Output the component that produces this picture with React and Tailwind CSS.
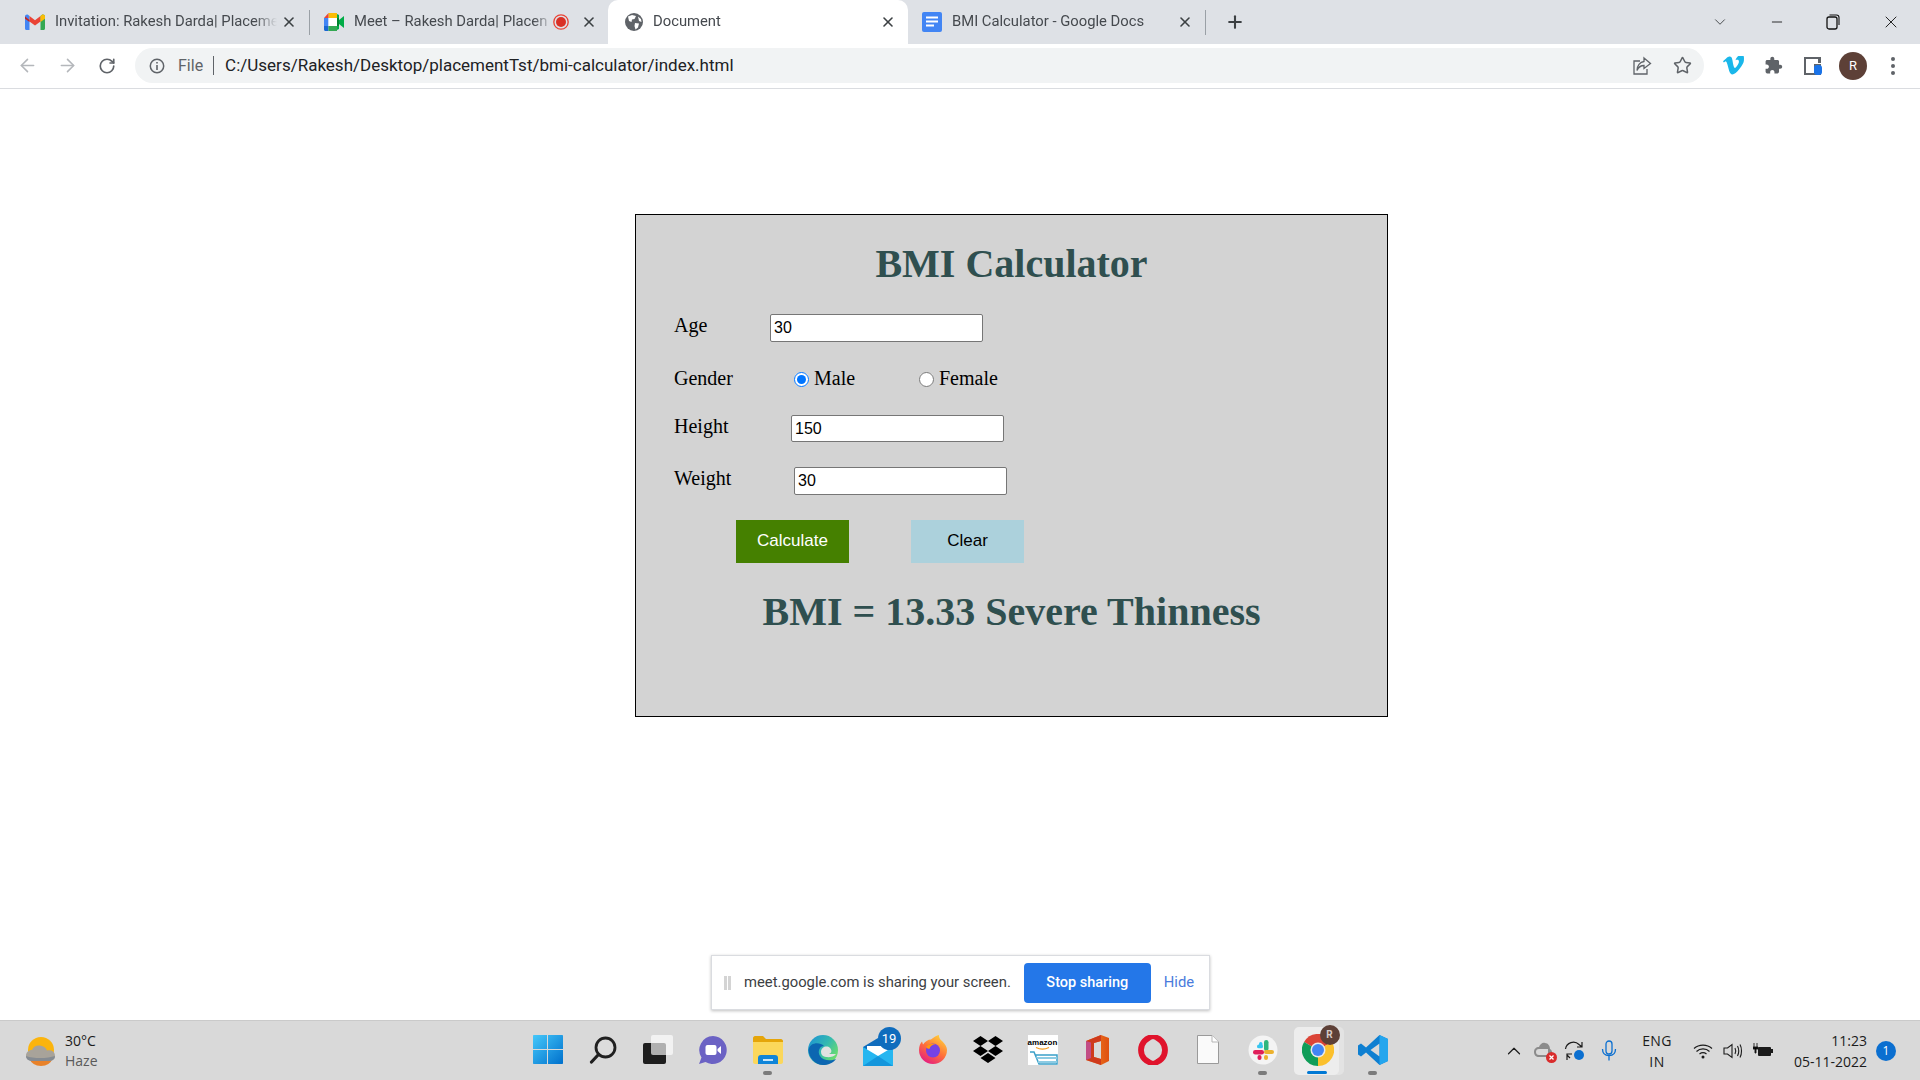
import { ArrowLeft, ArrowRight, RotateCw, X, Plus, ChevronDown, ChevronUp, Minus, Star } from 'lucide-react';

function GmailIcon() {
  return (
    <svg width="20" height="16" viewBox="0 0 20 16">
      <path d="M0 2.5C0 .5 2 0 3 .8L4.500 2V16H1.500C.6 16 0 15.300 0 14.500Z" fill="#4285f4" />
      <path d="M20 2.500C20 .5 18 0 17 .8L15.500 2V16H18.500C19.400 16 20 15.300 20 14.500Z" fill="#34a853" />
      <path d="M4.500 2L10 6.300 15.500 2V7.500L10 11.600 4.500 7.500Z" fill="#ea4335" />
      <path d="M0 2.500L4.500 6V8L0 4.700Z" fill="#c5221f" />
      <path d="M15.500 2L17 .8C18 0 20 .5 20 2.500V4.700L15.500 8Z" fill="#fbbc04" />
    </svg>
  );
}

function MeetIcon() {
  return (
    <svg width="20" height="18" viewBox="0 0 20 18">
      <path d="M4.500 0H13V5H4.500Z" fill="#fbbc04" />
      <path d="M4.500 0V5H0Z" fill="#ea4335" />
      <path d="M0 5H4.500V13H0Z" fill="#4285f4" />
      <path d="M0 13H4.500V18H1.500C.6 18 0 17.300 0 16.500Z" fill="#1967d2" />
      <path d="M4.500 13H13V18H4.500Z" fill="#34a853" />
      <path d="M4.500 5H13V13H4.500Z" fill="#fff" />
      <path d="M13 1V17L15 16V11L20 15V3L15 7V2Z" fill="#00ac47" />
      <path d="M13 5H15V13H13Z" fill="#00832d" />
    </svg>
  );
}

function GlobeIcon() {
  return (
    <svg width="18" height="18" viewBox="0 0 18 18">
      <circle cx="9" cy="9" r="9" fill="#5f6368" />
      <path d="M3 3.500L7 2 11 3 9.500 6 7 6.500 6.500 9 4 8ZM10 10L14 10.500 13 14.500 10.500 16.500 9.500 13ZM13 3.500L16 6 16.500 9 14 8Z" fill="#fff" />
    </svg>
  );
}

function DocsIcon() {
  return (
    <svg width="20" height="20" viewBox="0 0 20 20">
      <rect width="20" height="20" rx="2" fill="#4285f4" />
      <path d="M4 4.500H16V6.500H4ZM4 8.500H16V10.500H4ZM4 12.500H12V14.500H4Z" fill="#fff" />
    </svg>
  );
}

function RecDot() {
  return (
    <svg width="16" height="16" viewBox="0 0 16 16" className="shrink-0">
      <circle cx="8" cy="8" r="7.200" fill="none" stroke="#ea4335" strokeWidth="1.300" />
      <circle cx="8" cy="8" r="5" fill="#d93025" />
    </svg>
  );
}

function Tab({ w, pad, gap, icon, title, rec, active }) {
  return (
    <div className={`relative flex h-[44px] items-center shrink-0 ${w} ${pad} ${active ? 'bg-white rounded-t-[10px]' : ''} font-['Roboto',sans-serif] text-[14.800px] text-[#45494e]`}>
      <div className="flex w-[20px] justify-center shrink-0">{icon}</div>
      <div className={`${gap} flex-1 -translate-y-px overflow-hidden whitespace-nowrap [mask-image:linear-gradient(to_right,black_90%,transparent_100%)]`}>{title}</div>
      {rec && <RecDot />}
      <X size={16} strokeWidth={2.400} color="#3c4043" className={`shrink-0 ${rec ? 'ml-[12px] mr-[11px]' : 'mr-[12px] ml-[4px]'}`} />
    </div>
  );
}

function TabStrip() {
  return (
    <div className="flex h-[44px] items-center bg-[#dee1e6]">
      <Tab w="w-[309px]" pad="pl-[25px]" gap="ml-[10px]" icon={<GmailIcon />} title="Invitation: Rakesh Darda| Placeme" />
      <div className="h-[25px] w-px bg-[#9aa0a6] shrink-0" />
      <Tab w="w-[298px]" pad="pl-[14px]" gap="ml-[10px]" icon={<MeetIcon />} title="Meet – Rakesh Darda| Placen" rec />
      <Tab w="w-[300px]" pad="pl-[16px]" gap="ml-[9px]" active icon={<GlobeIcon />} title="Document" />
      <Tab w="w-[297px]" pad="pl-[14px]" gap="ml-[10px]" icon={<DocsIcon />} title="BMI Calculator - Google Docs" />
      <div className="h-[25px] w-px bg-[#9aa0a6] shrink-0" />
      <div className="ml-[19px] shrink-0">
        <Plus size={20} strokeWidth={2.500} color="#3c4043" />
      </div>
      <div className="flex-1" />
      <div className="flex items-center pr-[19px]">
        <ChevronDown size={18} strokeWidth={1.200} color="#3c4043" className="mr-[40px]" />
        <Minus size={16} strokeWidth={1.300} color="#111" className="mr-[41px]" />
        <svg width="14" height="16" viewBox="0 0 14 16" className="mr-[41px]">
          <rect x="1" y="3" width="10" height="12" rx="2" fill="none" stroke="#111" strokeWidth="1.300" />
          <path d="M3.500 1H10.500C12 1 13 2 13 3.500V11" fill="none" stroke="#111" strokeWidth="1.100" />
        </svg>
        <X size={20} strokeWidth={1.100} color="#111" />
      </div>
    </div>
  );
}

function ToolButton({ children }) {
  return <div className="flex h-[40px] w-[40px] items-center justify-center shrink-0">{children}</div>;
}

function Toolbar() {
  return (
    <div className="flex h-[45px] items-center border-b border-[#dadce0] bg-white pb-[1px] pl-[7px]">
      <ToolButton><ArrowLeft size={21} strokeWidth={1.800} color="#b4b7bb" /></ToolButton>
      <ToolButton><ArrowRight size={21} strokeWidth={1.800} color="#b4b7bb" /></ToolButton>
      <ToolButton><RotateCw size={18} strokeWidth={2.200} color="#5f6368" /></ToolButton>
      <div className="ml-[8px] flex h-[35px] w-[1569px] items-center rounded-full bg-[#f1f3f4] pl-[14px] pr-[2px] shrink-0">
        <svg width="16" height="16" viewBox="0 0 16 16" className="shrink-0">
          <circle cx="8" cy="8" r="6.700" fill="none" stroke="#5f6368" strokeWidth="1.500" />
          <path d="M7.200 7H8.800V12H7.200ZM7.200 4H8.800V5.600H7.200Z" fill="#5f6368" />
        </svg>
        <span className="ml-[13px] font-['Roboto',sans-serif] text-[16px] text-[#5f6368]">File</span>
        <div className="ml-[10px] h-[19px] w-px bg-[#5f6368]" />
        <span className="ml-[11px] flex-1 font-['Roboto',sans-serif] text-[17px] text-[#202124]">C:/Users/Rakesh/Desktop/placementTst/bmi-calculator/index.html</span>
        <ToolButton>
          <svg width="20" height="20" viewBox="0 0 20 20" fill="none" stroke="#5f6368" strokeWidth="1.300">
            <path d="M8 5H2V18H15V13" />
            <path d="M12 2L18.500 7.500 12 12.500V9.500C8.500 9.500 6.500 11 5 14.500 5 9.500 8 6 12 5.500Z" />
          </svg>
        </ToolButton>
        <ToolButton><Star size={19} strokeWidth={1.900} color="#5f6368" /></ToolButton>
      </div>
      <div className="ml-[9px] flex">
        <ToolButton>
          <svg width="21" height="19" viewBox="0 0 21 19">
            <path d="M20.900 4.400C20.800 6.400 19.400 9.200 16.600 12.700 13.700 16.500 11.300 18.400 9.300 18.400 8.100 18.400 7 17.200 6.200 14.900L4.500 8.700C3.900 6.400 3.200 5.300 2.500 5.300L.9 6.400 0 5.200 3.100 2.500C4.500 1.300 5.600.6 6.300.6 8 .4 9 1.600 9.400 4L10.100 7.900C10.700 10.600 11.300 11.900 12 11.900 12.500 11.900 13.300 11.100 14.300 9.500 15.300 7.900 15.800 6.700 15.900 5.900 16 4.500 15.500 3.800 14.300 3.800 13.700 3.800 13.100 3.900 12.500 4.200 13.700 .6 15.900-1.200 19.100-1 21.100-.9 21.100 1.400 20.900 4.400Z" fill="#1ab7ea" />
          </svg>
        </ToolButton>
        <ToolButton>
          <svg width="19" height="19" viewBox="0 0 24 24">
            <path d="M20.500 11H19V7C19 5.900 18.100 5 17 5H13V3.500C13 2.100 11.900 1 10.500 1S8 2.100 8 3.500V5H4C2.900 5 2 5.900 2 7V10.800H3.500C5 10.800 6.200 12 6.200 13.500S5 16.200 3.500 16.200H2V20C2 21.100 2.900 22 4 22H7.800V20.500C7.800 19 9 17.800 10.500 17.800S13.200 19 13.200 20.500V22H17C18.100 22 19 21.100 19 20V16H20.500C21.900 16 23 14.900 23 13.500S21.900 11 20.500 11Z" fill="#5f6368" />
          </svg>
        </ToolButton>
        <ToolButton>
          <svg width="18" height="20" viewBox="0 0 18 20">
            <path d="M0 1H17V19H0ZM2 3V17H10V3Z" fill="#5f6368" />
            <rect x="10" y="9" width="8" height="10" rx="3" fill="#1a73e8" />
            <path d="M10 3H17V8H10Z" fill="#fff" />
            <path d="M14 3H17V7H14Z" fill="#5f6368" />
          </svg>
        </ToolButton>
        <ToolButton>
          <div className="flex h-[28px] w-[28px] items-center justify-center rounded-full bg-[#5d4037] font-['Roboto',sans-serif] text-[13px] text-white">R</div>
        </ToolButton>
        <ToolButton>
          <div className="flex flex-col gap-[3px]">
            <div className="h-[4px] w-[4px] rounded-full bg-[#5f6368]" />
            <div className="h-[4px] w-[4px] rounded-full bg-[#5f6368]" />
            <div className="h-[4px] w-[4px] rounded-full bg-[#5f6368]" />
          </div>
        </ToolButton>
      </div>
    </div>
  );
}

function TextField({ label, labelWidth, value, rowClass }) {
  return (
    <div className={`ml-[38px] flex items-start ${rowClass}`}>
      <label className={`text-[20px] leading-[23px] ${labelWidth}`}>{label}</label>
      <input
        readOnly
        value={value}
        className="h-full w-[213px] rounded-[2px] border border-[#767676] bg-white px-[3px] font-['Liberation_Sans',Arial,sans-serif] text-[16px] text-black outline-none"
      />
    </div>
  );
}

function BmiPanel() {
  return (
    <div className="ml-[635px] w-[753px] border border-black bg-[#d3d3d3] pb-[81px] pt-[26px] font-['Liberation_Serif','Times_New_Roman',serif] text-black">
      <h1 className="text-center text-[40px] font-bold leading-[46px] text-[#2f4f4f]">BMI Calculator</h1>
      <TextField label="Age" labelWidth="w-[96px]" value="30" rowClass="mt-[27px] h-[28px]" />
      <div className="ml-[38px] mt-[24px] flex h-[28px] items-start pt-[1px] text-[20px] leading-[23px]">
        <label className="w-[120px]">Gender</label>
        <input type="radio" name="gender" defaultChecked className="mt-[5px] h-[15px] w-[15px]" />
        <label className="ml-[5px] w-[105px]">Male</label>
        <input type="radio" name="gender" className="mt-[5px] h-[15px] w-[15px]" />
        <label className="ml-[5px]">Female</label>
      </div>
      <TextField label="Height" labelWidth="w-[117px]" value="150" rowClass="mt-[21px] h-[27px]" />
      <TextField label="Weight" labelWidth="w-[120px]" value="30" rowClass="mt-[25px] h-[28px]" />
      <div className="ml-[100px] mt-[25px] flex gap-[62px] font-['Liberation_Sans',Arial,sans-serif] text-[17px]">
        <button className="h-[43px] w-[113px] bg-[#458000] pb-[2px] text-white">Calculate</button>
        <button className="h-[43px] w-[113px] bg-[#acd1dc] pb-[2px] text-black">Clear</button>
      </div>
      <h2 className="mt-[26px] text-center text-[40px] font-bold leading-[46px] text-[#2f4f4f]">BMI = 13.33 Severe Thinness</h2>
    </div>
  );
}

function ShareBar() {
  return (
    <div className="absolute bottom-[10px] left-[711px] flex h-[55px] w-[499px] items-center border border-[#dadce0] bg-white pl-[12px] font-['Roboto',sans-serif] shadow-[0_1px_3px_rgba(0,0,0,0.25)]">
      <div className="flex gap-[1px]">
        <div className="h-[14px] w-[3px] bg-[#d4d4d4]" />
        <div className="h-[14px] w-[3px] bg-[#d4d4d4]" />
      </div>
      <span className="ml-[13px] text-[14.800px] text-[#3c4043]">meet.google.com is sharing your screen.</span>
      <button className="ml-[13px] h-[40px] w-[127px] rounded-[4px] bg-[#2477e8] text-[14.500px] font-medium text-white">Stop sharing</button>
      <span className="ml-[13px] text-[14.800px] text-[#4a7bdc]">Hide</span>
    </div>
  );
}

function WeatherIcon() {
  return (
    <svg width="30" height="30" viewBox="0 0 30 30">
      <circle cx="15" cy="14" r="13" fill="#fbb40d" />
      <path d="M3 22A13 13 0 0 0 27 22Z" fill="#e8822a" />
      <path d="M7 25C2.500 25 0 22.500 0 19.500S2.500 14 6 14C7.500 10 11 9 14 9.500 18 10 20 12 21 14.500 25 13.500 29 15.500 29 20S25 25 22 25Z" fill="#a8a39a" />
      <path d="M0 20C0 23 2.500 25 7 25H22C25 25 29 24 29 20 22 22.500 8 23 0 20Z" fill="#858b92" />
    </svg>
  );
}

function WindowsIcon() {
  return (
    <svg width="30" height="30" viewBox="0 0 30 30">
      <defs>
        <linearGradient id="win" x1="0" y1="0" x2="1" y2="1">
          <stop offset="0" stopColor="#45c8fa" />
          <stop offset="1" stopColor="#0070cc" />
        </linearGradient>
      </defs>
      <path d="M1 0H14V14H0V1C0 .4.4 0 1 0ZM15 0H29C29.600 0 30 .4 30 1V14H15ZM0 15H14V29H1C.4 29 0 28.600 0 28ZM15 15H30V28C30 28.600 29.600 29 29 29H15Z" fill="url(#win)" />
    </svg>
  );
}

function SearchIcon() {
  return (
    <svg width="28" height="28" viewBox="0 0 28 28" fill="none" stroke="#202020">
      <circle cx="16.500" cy="11.500" r="9.500" strokeWidth="2.800" fill="#dcdcdc" />
      <path d="M9.500 18.500L2.500 26" strokeWidth="3.200" strokeLinecap="round" />
    </svg>
  );
}

function TaskViewIcon() {
  return (
    <svg width="30" height="30" viewBox="0 0 30 30">
      <rect x="0" y="8" width="23" height="21" rx="2" fill="#1e1e1e" />
      <rect x="8" y="0" width="22" height="20" rx="2" fill="#fff" fillOpacity="0.650" />
    </svg>
  );
}

function ChatIcon() {
  return (
    <svg width="30" height="30" viewBox="0 0 30 30">
      <path d="M15 1A14 14 0 1 1 7.500 27L1 29 3.500 22.500A14 14 0 0 1 15 1Z" fill="#6b62c4" />
      <rect x="7.500" y="10" width="11" height="10" rx="2" fill="#fff" />
      <path d="M19.500 14L23 11V19L19.500 16Z" fill="#fff" />
    </svg>
  );
}

function ExplorerIcon() {
  return (
    <svg width="30" height="28" viewBox="0 0 30 28">
      <path d="M0 2C0 1 1 0 2 0H10L13 3H28C29 3 30 4 30 5V9H0Z" fill="#e5a50a" />
      <path d="M0 6H30V26C30 27 29 28 28 28H2C1 28 0 27 0 26Z" fill="#fbd75b" />
      <path d="M5 22C5 20 6 19 8 19H22C24 19 25 20 25 22V28H5Z" fill="#0f85d9" />
      <rect x="10" y="23" width="10" height="2" fill="#c8e6fa" />
    </svg>
  );
}

function EdgeIcon() {
  return (
    <svg width="30" height="30" viewBox="0 0 30 30">
      <defs>
        <linearGradient id="edgeTop" x1="0" y1="0" x2="1" y2="0.700">
          <stop offset="0" stopColor="#1b8fd9" />
          <stop offset="0.550" stopColor="#33b9b0" />
          <stop offset="1" stopColor="#6fe068" />
        </linearGradient>
      </defs>
      <circle cx="15" cy="15" r="15" fill="url(#edgeTop)" />
      <path d="M.5 15C1 23 7 30 15 30 20 30 25 28 28 24 23 26 15 26 12 21 9 16 12 11 16 11 12 7 2 7 .5 15Z" fill="#0c66b1" />
      <path d="M13 17C13 12 19 10 22 13 24 15 24 18 21 19H28C26 22 21 22.500 18 22 15 21.500 13 20 13 17Z" fill="#e2e2e2" />
    </svg>
  );
}

function MailIcon() {
  return (
    <div className="relative h-[28px] w-[30px] mt-[5px]">
      <svg width="30" height="28" viewBox="0 0 30 28">
        <path d="M0 9L15 0 30 9V28H0Z" fill="#0f6cbd" />
        <path d="M4 8H26V16L15 21 4 16Z" fill="#fff" />
        <path d="M0 9L15 18 30 9V28H0Z" fill="#26b6f0" />
        <path d="M0 28L15 18 30 28Z" fill="#1496dc" />
      </svg>
      <div className="absolute right-[-8px] top-[-11px] flex h-[23px] w-[23px] items-center justify-center rounded-full bg-[#0f6cbd] font-['Roboto',sans-serif] text-[13px] text-white">19</div>
    </div>
  );
}

function FirefoxIcon() {
  return (
    <svg width="30" height="30" viewBox="0 0 30 30">
      <defs>
        <linearGradient id="fox" x1="0.800" y1="0" x2="0.200" y2="1">
          <stop offset="0" stopColor="#ffd43a" />
          <stop offset="0.500" stopColor="#ff7139" />
          <stop offset="1" stopColor="#e31587" />
        </linearGradient>
      </defs>
      <path d="M15 29A14 14 0 0 1 1 15C1 11 2.500 8 4 6.500L5 9.500C7 6.500 10 4.500 13 4.500 15.500 2.500 19 0 21 0 20.500 2 22 4.500 24 6 27 9 29 12 29 15A14 14 0 0 1 15 29Z" fill="url(#fox)" />
      <circle cx="15" cy="15.500" r="7" fill="#7542e5" />
      <path d="M8 12C10 9 14 8 18 9 15 9.500 12 11 11.500 14 10 14 9 13 8 12Z" fill="#ff980e" />
    </svg>
  );
}

function DropboxIcon() {
  return (
    <svg width="30" height="28" viewBox="0 0 30 28" fill="#000">
      <path d="M7.500 0L15 5 7.500 10 0 5ZM22.500 0L30 5 22.500 10 15 5ZM0 15L7.500 10 15 15 7.500 20ZM30 15L22.500 20 15 15 22.500 10ZM7.500 22L15 17 22.500 22 15 27Z" />
    </svg>
  );
}

function AmazonIcon() {
  return (
    <div className="flex h-[30px] w-[30px] flex-col items-center bg-white pt-[3px]">
      <span className="font-['Liberation_Sans',Arial,sans-serif] text-[8px] font-bold leading-[9px] text-black">amazon</span>
      <svg width="30" height="18" viewBox="0 0 30 18">
        <path d="M8 0.500C12 2.500 17 2.500 21 0.500" fill="none" stroke="#f59b1d" strokeWidth="1.200" />
        <path d="M2 5H6L11 17H29V8H7" fill="none" stroke="#3aa0c9" strokeWidth="1.500" />
        <path d="M8 10H29V12H9ZM10 14H29V16H10Z" fill="#8ccbe3" />
      </svg>
    </div>
  );
}

function OfficeIcon() {
  return (
    <svg width="23" height="30" viewBox="0 0 23 30">
      <defs>
        <linearGradient id="office" x1="0" y1="0" x2="1" y2="0">
          <stop offset="0" stopColor="#ee8a2a" />
          <stop offset="1" stopColor="#e0500f" />
        </linearGradient>
      </defs>
      <path d="M15 0L23 3V26L15 30 0 25V6ZM8 8V22L15 24V6Z" fill="url(#office)" fillRule="evenodd" />
      <path d="M15 0V6L8 8V22L15 24V30L0 25V6Z" fill="#cf3a1c" />
      <path d="M0 6L5 7.500V23L0 25Z" fill="#c24d85" />
    </svg>
  );
}

function OperaIcon() {
  return (
    <svg width="30" height="30" viewBox="0 0 30 30">
      <ellipse cx="15" cy="15" rx="12" ry="12.800" fill="none" stroke="#e0132c" strokeWidth="5.800" />
      <ellipse cx="15" cy="15" rx="5.500" ry="11" fill="#d9d9d9" />
    </svg>
  );
}

function FileIcon() {
  return (
    <svg width="22" height="29" viewBox="0 0 22 29">
      <path d="M.5.5H15L21.500 7V28.500H.5Z" fill="#fafafa" stroke="#9a9a9a" />
      <path d="M15 .5V7H21.500" fill="#fff" stroke="#b5b5b5" />
    </svg>
  );
}

function SlackIcon() {
  return (
    <svg width="30" height="30" viewBox="0 0 30 30">
      <circle cx="15" cy="15" r="14.500" fill="#f4f4f4" />
      <rect x="16" y="5" width="4.500" height="11" rx="2.200" fill="#2eb67d" />
      <rect x="9" y="9.500" width="6" height="3.800" rx="1.900" fill="#36c5f0" />
      <rect x="11" y="7" width="3.500" height="6" rx="1.700" fill="#36c5f0" />
      <rect x="5" y="15" width="11" height="4.500" rx="2.200" fill="#e01e5a" />
      <rect x="9.500" y="20" width="4" height="5" rx="2" fill="#e01e5a" />
      <rect x="16" y="15" width="10" height="4" rx="2" fill="#ecb22e" />
      <rect x="16" y="20" width="4" height="5" rx="2" fill="#ecb22e" />
    </svg>
  );
}

function ChromeIcon() {
  return (
    <div className="relative h-[32px] w-[32px]">
      <svg width="32" height="32" viewBox="0 0 32 32">
        <path d="M16 16L2.100 8A16 16 0 0 1 29.900 8Z" fill="#db4437" />
        <path d="M16 16L2.100 8A16 16 0 0 0 16 32Z" fill="#0f9d58" />
        <path d="M16 16L16 32A16 16 0 0 0 29.900 8Z" fill="#fbc02d" />
        <circle cx="16" cy="16" r="7.500" fill="#e9e9e9" />
        <circle cx="16" cy="16" r="6" fill="#4285f4" />
      </svg>
      <div className="absolute right-[-6px] top-[-9px] flex h-[20px] w-[20px] items-center justify-center rounded-full bg-[#5d4037] font-['Roboto',sans-serif] text-[10px] font-bold text-[#d7ccc8]">R</div>
    </div>
  );
}

function VsCodeIcon() {
  return (
    <svg width="30" height="30" viewBox="0 0 30 30">
      <path d="M21.500 0L30 4V26L21.500 30 8 17.500 3 21.500 0 19.500V10.500L3 8.500 8 12.500ZM21.500 8.500L12.500 15 21.500 21.500Z" fill="#0e7fd1" />
      <path d="M21.500 0L30 4V26L21.500 30Z" fill="#25a6ee" />
    </svg>
  );
}

const dockItems = [
  { key: 'win', icon: <WindowsIcon /> },
  { key: 'search', icon: <SearchIcon /> },
  { key: 'task', icon: <TaskViewIcon /> },
  { key: 'chat', icon: <ChatIcon /> },
  { key: 'files', icon: <ExplorerIcon />, running: true },
  { key: 'edge', icon: <EdgeIcon /> },
  { key: 'mail', icon: <MailIcon /> },
  { key: 'firefox', icon: <FirefoxIcon /> },
  { key: 'dropbox', icon: <DropboxIcon /> },
  { key: 'amazon', icon: <AmazonIcon /> },
  { key: 'office', icon: <OfficeIcon /> },
  { key: 'opera', icon: <OperaIcon /> },
  { key: 'file', icon: <FileIcon /> },
  { key: 'slack', icon: <SlackIcon />, running: true },
  { key: 'chrome', icon: <ChromeIcon />, active: true },
  { key: 'code', icon: <VsCodeIcon />, running: true },
];

function DockCell({ item }) {
  return (
    <div className="relative flex h-full w-[55px] items-center justify-center shrink-0">
      {item.active && (
        <>
          <div className="absolute left-[6px] top-[6px] h-[48px] w-[48px] rounded-[5px] bg-[#e3e3e3]" />
          <div className="absolute left-[4px] top-[6px] h-[48px] w-[45px] rounded-[5px] bg-[#ededed]" />
        </>
      )}
      <div className="relative -translate-y-px">{item.icon}</div>
      {item.running && <div className="absolute bottom-[5px] left-[23px] h-[4px] w-[9px] rounded-full bg-[#7b7b7b]" />}
      {item.active && <div className="absolute bottom-[6px] left-[17px] h-[3px] w-[20px] rounded-full bg-[#0078d4]" />}
    </div>
  );
}

function Tray() {
  return (
    <div className="flex h-full flex-1 items-center text-[#1b1b1b]">
      <ChevronUp size={22} strokeWidth={1.300} color="#1b1b1b" className="ml-[103px]" />
      <div className="relative ml-[9px] h-[20px] w-[22px]">
        <svg width="20" height="16" viewBox="0 0 20 16" className="mt-[1px]">
          <path d="M5 15C2 15 0 13 0 10S2 5 5 5C6 2 9 0 11 1 14 1 16 4 16 7 18 8 19 11 18 15Z" fill="#8b8b8b" />
          <path d="M5 13C3 13 2 12 2 10S3 7 5 7H14V13Z" fill="#d9d9d9" />
        </svg>
        <svg width="11" height="11" viewBox="0 0 11 11" className="absolute bottom-[-2px] right-[-1px]">
          <circle cx="5.500" cy="5.500" r="5.500" fill="#d92c2c" />
          <path d="M3.500 3.500L7.500 7.500M7.500 3.500L3.500 7.500" stroke="#fff" strokeWidth="1.300" />
        </svg>
      </div>
      <svg width="21" height="21" viewBox="0 0 21 21" className="ml-[8px]" fill="none" stroke="#1b1b1b" strokeWidth="1.200">
        <path d="M1.500 9A8 8 0 0 1 15 4.500L18 7M18 2V7H13" />
        <path d="M3 20V14H8M3 15L6 18" />
        <circle cx="15" cy="15" r="5" fill="#0b6fd0" stroke="none" />
      </svg>
      <svg width="16" height="21" viewBox="0 0 16 21" className="ml-[16px]" fill="none" stroke="#0b6fd0" strokeWidth="1.300">
        <rect x="5" y="1" width="6" height="13" rx="3" />
        <path d="M1.500 9C1.500 13 4 15.500 8 15.500S14.500 13 14.500 9M8 15.500V20.500" />
      </svg>
      <div className="ml-[24px] w-[32px] whitespace-nowrap text-center font-['Open_Sans',sans-serif] text-[14px] leading-[21px] tracking-[0.4px]">
        <div>ENG</div>
        <div>IN</div>
      </div>
      <svg width="20" height="16" viewBox="0 0 20 16" className="ml-[20px]" fill="none" stroke="#1b1b1b" strokeWidth="1.200">
        <path d="M1 5.500C6 1 14 1 19 5.500M3.500 8.500C7 5 13 5 16.500 8.500M6.500 11C8.500 9.500 11.500 9.500 13.500 11" />
        <circle cx="10" cy="14" r="1.500" fill="#1b1b1b" stroke="none" />
      </svg>
      <svg width="20" height="16" viewBox="0 0 20 16" className="ml-[10px]" fill="none" stroke="#1b1b1b" strokeWidth="1.100">
        <path d="M1 5H4.500L9 1.500V14.500L4.500 11H1Z" />
        <path d="M12 5C13 7 13 9 12 11M14.500 3C16 6 16 10 14.500 13M17 1.500C19 5 19 11 17 14.500" />
      </svg>
      <svg width="20" height="16" viewBox="0 0 20 16" className="ml-[10px]">
        <rect x="5" y="4" width="13" height="9" rx="1" fill="#1b1b1b" />
        <rect x="18" y="6" width="2" height="4" fill="#1b1b1b" />
        <path d="M1 0V4M4 0V4M0 4H5V6H3V10H2V6H0Z" stroke="#1b1b1b" strokeWidth="0.900" />
      </svg>
      <div className="ml-[17px] w-[77px] whitespace-nowrap text-right font-['Open_Sans',sans-serif] text-[14px] leading-[21px]">
        <div>11:23</div>
        <div>05-11-2022</div>
      </div>
      <div className="ml-[9px] flex h-[20px] w-[20px] items-center justify-center rounded-full bg-[#0b6fd0] font-['Open_Sans',sans-serif] text-[12px] text-white">1</div>
    </div>
  );
}

function Taskbar() {
  return (
    <div className="flex h-[60px] border-t border-[#cacaca] bg-[#d9d9d9]">
      <div className="flex w-[520px] items-center pl-[26px] shrink-0">
        <WeatherIcon />
        <div className="ml-[9px] font-['Open_Sans',sans-serif] text-[14px] leading-[20px]">
          <div className="text-[#1b1b1b]">30°C</div>
          <div className="text-[#5a5a5a]">Haze</div>
        </div>
      </div>
      <div className="flex w-[880px] shrink-0">
        {dockItems.map((item) => (
          <DockCell key={item.key} item={item} />
        ))}
      </div>
      <Tray />
    </div>
  );
}

export default function App() {
  return (
    <div className="flex h-[1080px] w-[1920px] flex-col overflow-hidden bg-white font-['Open_Sans',sans-serif]">
      <TabStrip />
      <Toolbar />
      <div className="relative flex-1 pt-[125px]">
        <BmiPanel />
        <ShareBar />
      </div>
      <Taskbar />
    </div>
  );
}
